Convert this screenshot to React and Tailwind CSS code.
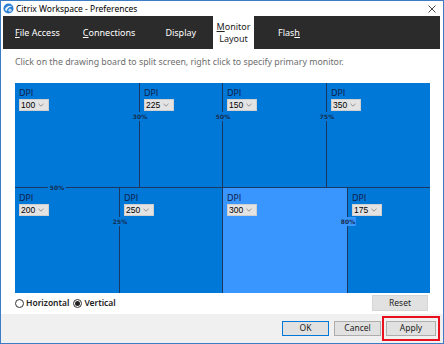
import React from "react";

const F = { fontFamily: '"Noto Sans", "Open Sans", sans-serif' };
const T = { fontFamily: '"DejaVu Sans", "Liberation Sans", sans-serif' };
const L = { fontFamily: '"Liberation Sans", Arial, sans-serif' };

function Chevron() {
  return (
    <svg width="6" height="4" viewBox="0 0 6 4" className="shrink-0">
      <polyline points="0.5,0.8 3,3.2 5.5,0.8" fill="none" stroke="#8a8a8a" strokeWidth="0.9" />
    </svg>
  );
}

function Dpi({ value }) {
  return (
    <div className="flex flex-col items-start pl-[4px] pt-[5px]">
      <span className="text-[8.5px] leading-[10px] text-[#0e2452]" style={T}>DPI</span>
      <div className="mt-[1px] h-[12px] bg-[#e3e3e3] border border-[#cfcfcf] flex items-center pr-[4px]">
        <span className="w-[18px] shrink-0 pl-[1px] text-[8.5px] leading-[10px] text-black" style={L}>{value}</span>
        <Chevron />
      </div>
    </div>
  );
}

function Pct({ children, light }) {
  return (
    <span
      className={`absolute left-0 top-[29px] -translate-x-1/2 px-[1px] text-[6px] leading-[9px] font-bold text-[#172c4f] ${light ? "bg-[#3a96ff]" : "bg-[#0078d7]"}`}
      style={T}
    >
      {children}
    </span>
  );
}

function CitrixIcon() {
  return (
    <svg width="11" height="11" viewBox="0 0 11 11">
      <circle cx="5.5" cy="5.5" r="5" fill="#2a7fd4" />
      <path d="M2 6.5 C3 3 7 2 9.5 3.5 C7 3.5 4.5 4.5 3.5 8.5 Z" fill="#e8f2fb" />
      <circle cx="7" cy="7.2" r="1.6" fill="#bcd8f2" />
    </svg>
  );
}

export default function App() {
  return (
    <div className="w-[444px] h-[344px] bg-white border border-[#3b7cc4] flex flex-col overflow-hidden" style={F}>
      {/* Title bar */}
      <div className="h-[15px] flex items-center pl-[2px] pr-[7px]">
        <CitrixIcon />
        <span className="ml-[2px] text-[8.5px] leading-[12px] text-black">Citrix Workspace - Preferences</span>
        <svg width="8" height="8" viewBox="0 0 8 8" className="ml-auto">
          <path d="M0.5 0.5 L7.5 7.5 M7.5 0.5 L0.5 7.5" stroke="#333" strokeWidth="0.9" />
        </svg>
      </div>

      {/* Tabs */}
      <div className="h-[33px] flex pl-[2px] pr-[3px]">
        <div className="w-[210px] bg-[#2b2b2b] flex items-center text-white text-[9px]">
          <span className="ml-[12px]"><u>F</u>ile Access</span>
          <span className="ml-[23px]"><u>C</u>onnections</span>
          <span className="ml-[30px]">Display</span>
        </div>
        <div className="w-[41px] flex flex-col items-center justify-center text-[9px] leading-[12px] text-[#222]">
          <span><u>M</u>onitor</span>
          <span>Layout</span>
        </div>
        <div className="flex-1 bg-[#2b2b2b] flex items-center text-white text-[9px]">
          <span className="ml-[24px]">Flas<u>h</u></span>
        </div>
      </div>

      {/* Content */}
      <div className="h-[265px] flex flex-col px-[14px]">
        <div className="pt-[7px] text-[8.8px] leading-[12px] text-[#6d6d6d]">
          Click on the drawing board to split screen, right click to specify primary monitor.
        </div>

        <div className="mt-[15px] w-[415px] flex flex-col bg-[#0078d7]">
          <div className="h-[104px] flex">
            <div className="w-[124px] relative"><Dpi value="100" /></div>
            <div className="w-[83px] relative border-l border-[#1b3760]"><Pct>30%</Pct><Dpi value="225" /></div>
            <div className="w-[104px] relative border-l border-[#1b3760]"><Pct>50%</Pct><Dpi value="150" /></div>
            <div className="flex-1 relative border-l border-[#1b3760]"><Pct>75%</Pct><Dpi value="350" /></div>
          </div>
          <div className="h-px bg-[#1b3760] relative">
            <span className="absolute left-[42px] top-[-4px] -translate-x-1/2 px-[2px] bg-[#0078d7] text-[6px] leading-[9px] font-bold text-[#172c4f]" style={T}>50%</span>
          </div>
          <div className="h-[105px] flex">
            <div className="w-[104px] relative"><Dpi value="200" /></div>
            <div className="w-[103px] relative border-l border-[#1b3760]"><Pct>25%</Pct><Dpi value="250" /></div>
            <div className="w-[125px] relative border-l border-[#1b3760] bg-[#3a96ff]"><Dpi value="300" /></div>
            <div className="flex-1 relative border-l border-[#1b3760]"><Pct light>80%</Pct><Dpi value="175" /></div>
          </div>
        </div>

        <div className="mt-[2px] h-[16px] flex items-center">
          <div className="flex items-center text-[8.5px] font-semibold text-[#222]">
            <span className="w-[9px] h-[9px] rounded-full border border-[#333] bg-white"></span>
            <span className="ml-[2px]">Horizontal</span>
            <span className="ml-[4px] w-[9px] h-[9px] rounded-full border border-[#333] bg-white flex items-center justify-center">
              <span className="w-[5px] h-[5px] rounded-full bg-[#222]"></span>
            </span>
            <span className="ml-[2px]">Vertical</span>
          </div>
          <div className="ml-auto mr-[1px] w-[56px] h-[16px] bg-[#e1e1e1] border border-[#d6d6d6] flex items-center justify-center text-[8.5px] text-[#222]">
            Reset
          </div>
        </div>
      </div>

      {/* Footer */}
      <div className="flex-1 bg-[#f0f0f0] flex items-center justify-end pr-[3px]">
        <div className="w-[47px] h-[15px] bg-[#e1e1e1] border border-[#0078d7] flex items-center justify-center text-[8.5px] text-[#222]">OK</div>
        <div className="ml-[5px] w-[47px] h-[15px] bg-[#e1e1e1] border border-[#adadad] flex items-center justify-center text-[8.5px] text-[#222]">Cancel</div>
        <div className="ml-[1px] w-[58px] h-[25px] border-2 border-[#e8101e] flex items-center justify-center">
          <div className="w-[50px] h-[15px] bg-[#e1e1e1] border border-[#adadad] flex items-center justify-center text-[8.5px] text-[#222]">Apply</div>
        </div>
      </div>
    </div>
  );
}
